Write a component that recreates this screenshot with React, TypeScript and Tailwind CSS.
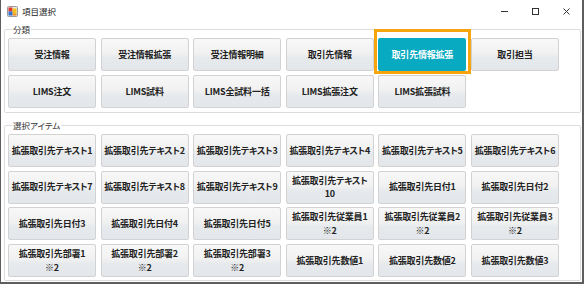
import { type ReactNode } from "react";

const categories = [
  "受注情報",
  "受注情報拡張",
  "受注情報明細",
  "取引先情報",
  "取引先情報拡張",
  "取引担当",
  "LIMS注文",
  "LIMS試料",
  "LIMS全試料一括",
  "LIMS拡張注文",
  "LIMS拡張試料",
];

const items = [
  "拡張取引先テキスト1",
  "拡張取引先テキスト2",
  "拡張取引先テキスト3",
  "拡張取引先テキスト4",
  "拡張取引先テキスト5",
  "拡張取引先テキスト6",
  "拡張取引先テキスト7",
  "拡張取引先テキスト8",
  "拡張取引先テキスト9",
  "拡張取引先テキスト\n10",
  "拡張取引先日付1",
  "拡張取引先日付2",
  "拡張取引先日付3",
  "拡張取引先日付4",
  "拡張取引先日付5",
  "拡張取引先従業員1\n※2",
  "拡張取引先従業員2\n※2",
  "拡張取引先従業員3\n※2",
  "拡張取引先部署1\n※2",
  "拡張取引先部署2\n※2",
  "拡張取引先部署3\n※2",
  "拡張取引先数値1",
  "拡張取引先数値2",
  "拡張取引先数値3",
];

const ACTIVE = "取引先情報拡張";

function ItemButton({ label, active }: { label: string; active?: boolean }) {
  return (
    <button
      className={
        active
          ? "h-[33px] w-[88px] rounded-[2px] bg-[#07aac0] text-white font-bold text-[9px] leading-[13.5px] tracking-[-0.2px] whitespace-pre [font-feature-settings:'palt']"
          : "h-[33px] w-[88px] rounded-[2px] border border-[#d2d2d2] bg-[linear-gradient(to_bottom,#f8f8f8_0%,#f1f1f1_45%,#e7eaed_60%,#e3e6ea_100%)] text-[#222] font-bold text-[9px] leading-[13.5px] tracking-[-0.2px] whitespace-pre [font-feature-settings:'palt']"
      }
    >
      {label}
    </button>
  );
}

function GroupBox({ title, className, children }: { title: string; className?: string; children: ReactNode }) {
  return (
    <fieldset className={`border border-[#dcdcdc] rounded-[2px] px-[3px] ${className ?? ""}`}>
      <legend className="ml-[4px] px-[1px] text-[8.5px] leading-[12px] text-[#333] [font-feature-settings:'palt']">
        {title}
      </legend>
      {children}
    </fieldset>
  );
}

export default function App() {
  return (
    <div className="relative w-[584px] h-[285px] bg-white font-['Noto_Sans_CJK_JP',sans-serif]">
      <div className="flex h-[284px] w-[584px] flex-col border-l border-r-2 border-b-2 border-[#5e5e5e]">
        {/* Title bar */}
        <div className="flex h-[23px] items-center">
          <svg width="11" height="11" viewBox="0 0 11 11" className="ml-[6px]">
            <rect x="0.5" y="0.5" width="10" height="10" rx="1" fill="#e9e9e9" stroke="#9a9a9a" />
            <rect x="1.5" y="1.5" width="4" height="4" fill="#e0352b" />
            <rect x="5.5" y="2.5" width="4" height="5" fill="#f4c21a" />
            <rect x="1.5" y="5.5" width="4" height="4" fill="#2f6fd0" />
            <rect x="5.5" y="7.5" width="4" height="2" fill="#f08a1c" />
          </svg>
          <span className="ml-[4px] text-[8.5px] text-[#222]">項目選択</span>
          <div className="ml-auto flex h-full">
            <div className="flex w-[31px] items-center justify-center">
              <svg width="7" height="7" viewBox="0 0 7 7">
                <path d="M0 3.5H7" stroke="#333" strokeWidth="1" />
              </svg>
            </div>
            <div className="flex w-[31px] items-center justify-center">
              <svg width="7" height="7" viewBox="0 0 7 7">
                <rect x="0.5" y="0.5" width="6" height="6" fill="none" stroke="#333" strokeWidth="1" />
              </svg>
            </div>
            <div className="flex w-[31px] items-center justify-center">
              <svg width="7" height="7" viewBox="0 0 7 7">
                <path d="M0.5 0.5L6.5 6.5M6.5 0.5L0.5 6.5" stroke="#333" strokeWidth="1" />
              </svg>
            </div>
          </div>
        </div>

        {/* Body */}
        <div className="flex flex-col pl-[3px] pr-[1px]">
          <GroupBox title="分類" className="pt-[3px] pb-[4px]">
            <div className="grid grid-cols-[repeat(6,88px)] gap-x-[4.6px] gap-y-[4px]">
              {categories.map((c) => (
                <ItemButton key={c} label={c} active={c === ACTIVE} />
              ))}
            </div>
          </GroupBox>

          <GroupBox title="選択アイテム" className="mt-[6px] pt-[3px] pb-[3px]">
            <div className="grid grid-cols-[repeat(6,88px)] gap-x-[4.6px] gap-y-[3.7px]">
              {items.map((c) => (
                <ItemButton key={c} label={c} />
              ))}
            </div>
          </GroupBox>
        </div>
      </div>

      {/* Highlight annotation */}
      <div className="pointer-events-none absolute left-[374px] top-[29px] h-[45px] w-[97px] border-[3px] border-[#f6a50e]" />
    </div>
  );
}
